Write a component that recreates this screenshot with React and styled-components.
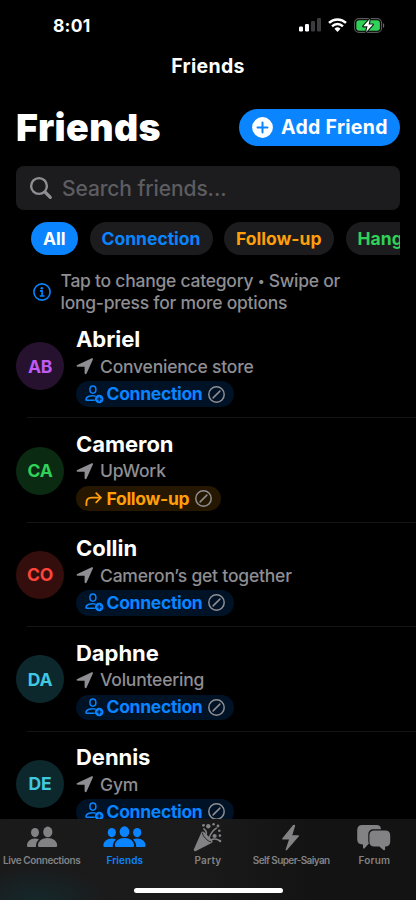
import React from 'react';
import styled, { createGlobalStyle } from 'styled-components';

const GlobalStyle = createGlobalStyle`
    * {
        box-sizing: border-box;
    }

    body {
        margin: 0;
        background: #000;
        font-family: Inter, 'Liberation Sans', sans-serif;
        -webkit-font-smoothing: antialiased;
    }
`;

const Screen = styled.div`
    width: 416px;
    height: 900px;
    display: flex;
    flex-direction: column;
    overflow: hidden;
    background: #000;
    color: #fff;
`;

const StatusBar = styled.div`
    flex: none;
    height: 50px;
    padding: 0 31px 0 53px;
    display: flex;
    align-items: center;
    justify-content: space-between;
`;

const Time = styled.span`
    font-size: 17.5px;
    font-weight: 700;
    letter-spacing: 0.2px;
`;

const StatusIcons = styled.div`
    display: flex;
    align-items: center;
    gap: 7px;

    svg {
        display: block;
    }
`;

const NavBar = styled.div`
    flex: none;
    height: 32px;
    display: flex;
    align-items: center;
    justify-content: center;
    font-size: 19.5px;
    font-weight: 700;
    letter-spacing: 0.3px;
`;

const Content = styled.div`
    flex: none;
    padding: 27px 16px 0;
`;

const Header = styled.div`
    display: flex;
    align-items: center;
    justify-content: space-between;
    height: 36.5px;
`;

const Title = styled.h1`
    margin: 0;
    font-size: 37.5px;
    font-weight: 900;
    letter-spacing: 0.4px;
`;

const AddButton = styled.button`
    display: flex;
    align-items: center;
    gap: 8px;
    width: 161px;
    height: 36.5px;
    padding: 0 0 0 13px;
    border: 0;
    border-radius: 19px;
    background: #0a84ff;
    color: #fff;
    font-family: inherit;
    font-size: 19.5px;
    font-weight: 700;
    letter-spacing: 0.3px;
    white-space: nowrap;
`;

const Search = styled.div`
    display: flex;
    align-items: center;
    gap: 9px;
    height: 44px;
    margin-top: 20.5px;
    padding-left: 13px;
    border-radius: 8px;
    background: #1c1c1e;
    color: #5c5c61;
    font-size: 21px;
    font-weight: 450;
    letter-spacing: -0.1px;
`;

const Chips = styled.div`
    display: flex;
    gap: 11.5px;
    margin-top: 12px;
    padding-left: 15px;
    overflow: hidden;
`;

const Chip = styled.div`
    flex: none;
    width: ${props => props.$width}px;
    height: 32.5px;
    padding-left: 12px;
    display: flex;
    align-items: center;
    border-radius: 17px;
    background: ${props => props.$active ? '#0a84ff' : '#1c1c1e'};
    color: ${props => props.$color};
    font-size: 17.5px;
    font-weight: 700;
    letter-spacing: 0;
    white-space: nowrap;
`;

const Hint = styled.div`
    display: flex;
    align-items: center;
    gap: 10px;
    margin-top: 15.5px;
    padding-left: 16.5px;
    color: #8e8e93;
    font-size: 17.5px;
    font-weight: 450;
    line-height: 22px;
    letter-spacing: -0.25px;
    white-space: nowrap;
`;

const Dot = styled.span`
    font-size: 13px;
    line-height: 1;
    vertical-align: 1px;
`;

const List = styled.div`
    flex: 1;
    min-height: 0;
    overflow: hidden;
`;

const Row = styled.div`
    display: flex;
    align-items: center;
    gap: 12px;
    height: 104.4px;
    padding-left: 16px;
    background: linear-gradient(#151517, #151517) 27px 100% / 389px 1px no-repeat;
`;

const Avatar = styled.div`
    width: 48px;
    height: 48px;
    border-radius: 50%;
    display: flex;
    align-items: center;
    justify-content: center;
    background: ${props => props.$bg};
    color: ${props => props.$color};
    font-size: 17.5px;
    font-weight: 700;
    letter-spacing: -0.2px;
`;

const Info = styled.div`
    display: flex;
    flex-direction: column;
    align-items: flex-start;
`;

const Name = styled.div`
    font-size: 22px;
    font-weight: 700;
    line-height: 28px;
    letter-spacing: -0.05px;
`;

const Place = styled.div`
    display: flex;
    align-items: center;
    gap: 6px;
    height: 28px;
    padding-bottom: 2px;
    color: #8e8e93;
    font-size: 17.5px;
    font-weight: 450;
    letter-spacing: -0.2px;
`;

const Badge = styled.div`
    display: flex;
    align-items: center;
    height: 25.5px;
    padding: 0 9px;
    border-radius: 13px;
    background: ${props => props.$bg};
    color: ${props => props.$color};
    font-size: 17.5px;
    font-weight: 650;
    letter-spacing: -0.3px;
    line-height: 24px;

    > svg {
        flex: none;
        margin-left: 5.5px;
    }
`;

const BadgeIcon = styled.span`
    display: flex;
    width: 21.5px;

    svg {
        flex: none;
    }
`;

const TabBar = styled.div`
    flex: none;
    height: 81px;
    display: flex;
    flex-direction: column;
    align-items: center;
    justify-content: space-between;
    padding-bottom: 7px;
    background:
        radial-gradient(ellipse 70px 34px at 36px 100%, #15282b, transparent),
        linear-gradient(90deg, #1a1a1b, #1b1b1c 45%, #131313 75%);
`;

const Tabs = styled.div`
    display: flex;
    width: 100%;
`;

const Tab = styled.div`
    flex: 1 0 0;
    min-width: 0;
    display: flex;
    flex-direction: column;
    align-items: center;
    color: ${props => props.$active ? '#0a84ff' : '#828284'};
    font-size: 10px;
    font-weight: 600;
    line-height: 14px;
    letter-spacing: ${props => props.$spacing}px;
    white-space: nowrap;

    svg {
        display: block;
    }
`;

const HomeIndicator = styled.div`
    width: 149px;
    height: 5.5px;
    border-radius: 3px;
    background: #fff;
`;

const Signal = () => (
    <svg width="22" height="14" viewBox="0 0 22 14">
        <rect x="0" y="8.5" width="4" height="5" rx="1.2" fill="#fff" />
        <rect x="6" y="6" width="4" height="7.5" rx="1.2" fill="#fff" />
        <rect x="12" y="3" width="4" height="10.5" rx="1.2" fill="#3c3c3e" />
        <rect x="18" y="0" width="4" height="13.5" rx="1.2" fill="#3c3c3e" />
    </svg>
);

const Wifi = () => (
    <svg width="19" height="14" viewBox="0 0 19 14" fill="none" stroke="#fff" strokeWidth="2.5">
        <path d="M1 4.9a12.2 12.2 0 0 1 17 0" />
        <path d="M4.1 8.3a7.7 7.7 0 0 1 10.8 0" />
        <path d="M9.5 14l-3-3.2a4.3 4.3 0 0 1 6 0z" fill="#fff" stroke="none" />
    </svg>
);

const Battery = () => (
    <svg width="31" height="15" viewBox="0 0 31 15">
        <rect x="0.6" y="0.6" width="27" height="13.8" rx="4.4" fill="none" stroke="#58585a" strokeWidth="1.1" />
        <path d="M29 5.2c1.7.6 1.7 4 0 4.6z" fill="#6a6a6c" />
        <rect x="2.3" y="2.2" width="23.6" height="10.6" rx="2.8" fill="#30d158" />
        <path d="M15.8.9L9.3 8.3h4.2L12.2 14l6.7-7.5h-4.3z" fill="#fff" stroke="#0c1f12" strokeWidth="2.2" paintOrder="stroke" strokeLinejoin="round" />
    </svg>
);

const PlusCircle = () => (
    <svg width="21" height="21" viewBox="0 0 21 21">
        <circle cx="10.5" cy="10.5" r="10.4" fill="#fff" />
        <path d="M10.5 5.5v10M5.5 10.5h10" stroke="#0a84ff" strokeWidth="2" strokeLinecap="round" />
    </svg>
);

const Magnifier = () => (
    <svg width="24" height="24" viewBox="0 0 24 24" fill="none" stroke="#8e8e93" strokeLinecap="round">
        <circle cx="10" cy="10" r="7.9" strokeWidth="2.4" />
        <path d="M16 16l5.3 5.3" strokeWidth="3.2" />
    </svg>
);

const InfoIcon = () => (
    <svg width="18" height="18" viewBox="0 0 18 18" fill="none" stroke="#0a84ff">
        <circle cx="9" cy="9" r="8.1" strokeWidth="1.6" />
        <circle cx="8.8" cy="5.2" r="1.3" fill="#0a84ff" stroke="none" />
        <path d="M7 7.9h2.1v5M6.7 13h4.8" strokeWidth="1.6" />
    </svg>
);

const LocationArrow = () => (
    <svg width="18" height="18" viewBox="0 0 18 18">
        <path d="M1.3 8L15.7 1.300c.9-.4 1.600.3 1.200 1.200L10.600 16.500c-.5 1.100-2 .9-2-.4V9.700H1.800C.4 9.700.1 8.600 1.300 8z" fill="#8e8e93" />
    </svg>
);

const PersonPlus = () => (
    <svg width="19" height="19" viewBox="0 0 19 19" fill="none" stroke="#0a84ff" strokeWidth="1.5">
        <ellipse cx="7.9" cy="4.6" rx="3" ry="3.6" />
        <path d="M10.2 11.1C5.8 9.8 1.2 11.6 1 14.4c0 .6.3.8.9.8h7.3" strokeLinecap="round" />
        <circle cx="14.2" cy="14" r="4.3" fill="#0a84ff" stroke="none" />
        <path d="M14.2 11.7v4.6M11.9 14h4.6" stroke="#001428" strokeWidth="1.2" />
    </svg>
);

const ArrowTurn = () => (
    <svg width="18" height="18" viewBox="0 0 18 18" fill="none" stroke="#ff9f0a" strokeWidth="1.8" strokeLinecap="round" strokeLinejoin="round">
        <path d="M1.4 15.2V13c0-3.5 1.8-5.3 5.3-5.3h8.9" />
        <path d="M11.2 3.1l4.6 4.6-4.6 4.6" />
    </svg>
);

const Slash = () => (
    <svg width="17" height="17" viewBox="0 0 17 17" fill="none" stroke="#8e8e93" strokeWidth="1.5">
        <circle cx="8.5" cy="8.5" r="7.7" />
        <path d="M5.1 11.9l6.8-6.8" strokeLinecap="round" />
    </svg>
);

const TwoPeople = () => (
    <svg width="42" height="34" viewBox="0 0 42 34" fill="currentColor">
        <ellipse cx="14" cy="13.6" rx="4" ry="4.6" />
        <path d="M6 26.6c0-4 3.5-7 8-7 1.4 0 2.8.3 4 .9-2 1.6-3 3.7-3.1 6.9v.7H7.6c-1 0-1.6-.5-1.6-1.5z" />
        <ellipse cx="26.8" cy="12.9" rx="4.6" ry="5.3" />
        <path d="M17 26.4c0-4.2 4.2-7.3 9.6-7.3s9.6 3.1 9.6 7.3c0 1.1-.7 1.7-2 1.7H19c-1.3 0-2-.6-2-1.7z" />
    </svg>
);

const ThreePeople = () => (
    <svg width="44" height="34" viewBox="0 0 44 34" fill="currentColor">
        <ellipse cx="8.8" cy="13.6" rx="4.1" ry="4.6" />
        <path d="M.4 26.6c0-4 3.7-7 8.4-7 1.6 0 3 .4 4.2 1-2.1 1.7-3.2 4-3.2 6.8v.7H2.1c-1.1 0-1.7-.5-1.7-1.5z" />
        <ellipse cx="34.2" cy="13.6" rx="4.1" ry="4.6" />
        <path d="M42.6 26.6c0-4-3.7-7-8.4-7-1.6 0-3 .4-4.2 1 2.1 1.7 3.2 4 3.2 6.8v.7h7.7c1.1 0 1.7-.5 1.7-1.5z" />
        <ellipse cx="21.5" cy="12.7" rx="4.9" ry="5.4" />
        <path d="M11.9 26.4c0-4.2 4.2-7.3 9.6-7.3s9.6 3.1 9.6 7.3c0 1.1-.7 1.7-2 1.7H13.9c-1.3 0-2-.6-2-1.7z" />
    </svg>
);

const Popper = () => (
    <svg width="32" height="34" viewBox="0 0 32 34" fill="currentColor">
        <path d="M9.3 13.6C10 12 11.2 12.3 12.7 13.6l6.8 6.8c1.4 1.6 1.6 2.6.1 3.5L4 32c-1.5.7-2.7-.4-2-2z" />
        <path d="M10.6 13.6c-.8 2.8 5.4 9.4 8.6 9.2" fill="none" stroke="#1a1a1b" strokeWidth="0.9" />
        <path d="M14.2 15.6c.6-2 .2-3.8-2.3-5.8M17.4 18.3c1.2-3.8 3-6.8 7-9.2M19.2 20.8c2.2-1.6 4.6-1 7.8.4" fill="none" stroke="currentColor" strokeWidth="1.5" strokeLinecap="round" />
        <circle cx="11.5" cy="6.3" r="1.4" />
        <circle cx="16.3" cy="7.3" r="2.2" />
        <circle cx="21.6" cy="5.3" r="1.3" />
        <circle cx="26" cy="7" r="1.4" />
        <circle cx="27.3" cy="11.7" r="1.3" />
        <circle cx="22.6" cy="17" r="2.1" />
        <circle cx="27.9" cy="16.6" r="1.3" />
        <circle cx="28" cy="22" r="1.3" />
    </svg>
);

const Bolt = () => (
    <svg width="20" height="34" viewBox="0 0 20 34" fill="currentColor">
        <path d="M11.9 6.3L1.4 19.3c-.5.7-.2 1.3.6 1.3h6L4.7 30.2c-.4 1.2.6 1.6 1.3.7L17.7 17.6c.6-.7.3-1.4-.6-1.4h-5.8l2.8-9.1c.4-1.4-1.3-1.9-2.2-.8z" />
    </svg>
);

const Bubbles = () => (
    <svg width="36" height="34" viewBox="0 0 36 34" fill="currentColor">
        <path d="M6.4 6h14.2C23.4 6 25 7.5 25 10.2H17.8C14.2 10.2 12.3 12.1 12.3 15.7v5.8c0 1.2.2 2.2.6 3L8.6 29.2c-.8.8-1.6.5-1.6-.6v-3.1H6.4C3 25.5 1.2 23.7 1.2 20.3V11.2C1.2 7.8 3 6 6.4 6z" />
        <path d="M18.2 11.6h11.2c3.1 0 4.8 1.7 4.8 4.8v6.4c0 3.1-1.7 4.8-4.8 4.8h-.3v2.6c0 1.1-.9 1.4-1.7.7L23.3 27.6h-5.1c-3.1 0-4.8-1.7-4.8-4.8v-6.4c0-3.1 1.7-4.8 4.8-4.8z" />
    </svg>
);

const badges = {
    connection: { label: 'Connection', color: '#0a84ff', bg: '#001226', icon: <PersonPlus /> },
    followUp: { label: 'Follow-up', color: '#ff9f0a', bg: '#261800', icon: <ArrowTurn /> },
};

const friends = [
    { initials: 'AB', name: 'Abriel', place: 'Convenience store', badge: 'connection', color: '#bf5af2', bg: '#26122f' },
    { initials: 'CA', name: 'Cameron', place: 'UpWork', badge: 'followUp', color: '#30d158', bg: '#0a2a12' },
    { initials: 'CO', name: 'Collin', place: 'Cameron’s get together', badge: 'connection', color: '#ff453a', bg: '#330e0c' },
    { initials: 'DA', name: 'Daphne', place: 'Volunteering', badge: 'connection', color: '#40c8e0', bg: '#0d282d' },
    { initials: 'DE', name: 'Dennis', place: 'Gym', badge: 'connection', color: '#40c8e0', bg: '#0d282d' },
];

const tabs = [
    { label: 'Live Connections', icon: <TwoPeople />, spacing: -0.4 },
    { label: 'Friends', icon: <ThreePeople />, spacing: 0.1, active: true },
    { label: 'Party', icon: <Popper />, spacing: 0.2 },
    { label: 'Self Super-Saiyan', icon: <Bolt />, spacing: -0.6 },
    { label: 'Forum', icon: <Bubbles />, spacing: 0.2 },
];

const FriendRow = ({ friend }) => {
    const badge = badges[friend.badge];

    return (
        <Row>
            <Avatar $bg={friend.bg} $color={friend.color}>{friend.initials}</Avatar>
            <Info>
                <Name>{friend.name}</Name>
                <Place><LocationArrow />{friend.place}</Place>
                <Badge $bg={badge.bg} $color={badge.color}>
                    <BadgeIcon>{badge.icon}</BadgeIcon>
                    {badge.label}
                    <Slash />
                </Badge>
            </Info>
        </Row>
    );
};

const App = () => (
    <>
        <GlobalStyle />
        <Screen>
            <StatusBar>
                <Time>8:01</Time>
                <StatusIcons>
                    <Signal />
                    <Wifi />
                    <Battery />
                </StatusIcons>
            </StatusBar>
            <NavBar>Friends</NavBar>
            <Content>
                <Header>
                    <Title>Friends</Title>
                    <AddButton><PlusCircle />Add Friend</AddButton>
                </Header>
                <Search><Magnifier />Search friends...</Search>
                <Chips>
                    <Chip $active $width={47} $color="#fff">All</Chip>
                    <Chip $width={123} $color="#0a84ff">Connection</Chip>
                    <Chip $width={110} $color="#ff9f0a">Follow-up</Chip>
                    <Chip $width={110} $color="#30d158">Hangout</Chip>
                </Chips>
                <Hint>
                    <InfoIcon />
                    <div>Tap to change category <Dot>•</Dot> Swipe or<br />long-press for more options</div>
                </Hint>
            </Content>
            <List>
                {friends.map(friend => <FriendRow key={friend.name} friend={friend} />)}
            </List>
            <TabBar>
                <Tabs>
                    {tabs.map(tab => (
                        <Tab key={tab.label} $active={tab.active} $spacing={tab.spacing}>
                            {tab.icon}
                            {tab.label}
                        </Tab>
                    ))}
                </Tabs>
                <HomeIndicator />
            </TabBar>
        </Screen>
    </>
);

export default App;
